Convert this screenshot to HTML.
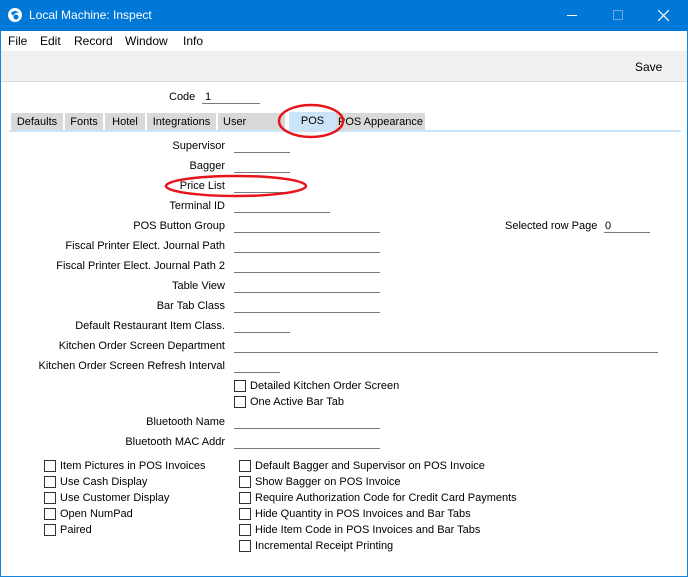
<!DOCTYPE html>
<html><head><meta charset="utf-8"><style>
*{margin:0;padding:0;box-sizing:border-box}
body{width:688px;height:577px;position:relative;background:#fff;font-family:"Liberation Sans",sans-serif;font-size:11px;color:#000;overflow:hidden}
.win{position:absolute;left:0;top:0;width:688px;height:577px;border:1px solid #1883d7}
.title{position:absolute;left:0;top:0;width:688px;height:31px;background:#0078d7;color:#fff;font-size:12px}
.menu{position:absolute;top:31px;left:1px;width:686px;height:20px;background:#fff;font-size:12px}
.menu span{position:absolute;top:3px}
.tool{position:absolute;top:51px;left:1px;width:686px;height:31px;background:#f0f0f0;border-bottom:1px solid #dadada}
.a{position:absolute;white-space:nowrap}
.l{position:absolute;right:463px;white-space:nowrap;text-align:right}
.f{position:absolute;height:1px;background:#7a7a7a}
.cb{position:absolute;width:12px;height:12px;border:1px solid #333;background:#fff}
.tab{position:absolute;top:113px;height:18px;background:#d9d9d9;text-align:center;line-height:18px}
</style></head><body>
<div class="win"></div>
<div class="title">
<svg style="position:absolute;left:7px;top:7px" width="16" height="16" viewBox="0 0 16 16"><circle cx="8" cy="8" r="7" fill="#fff"/><path d="M4 6 Q8 2 12 6 Q8 5 6 9 Z" fill="#0078d7"/><circle cx="9" cy="10" r="2.5" fill="#0078d7"/></svg>
<span class="a" style="left:29px;top:8px">Local Machine: Inspect</span>
<div style="position:absolute;left:567px;top:15px;width:10px;height:1px;background:#fff"></div>
<div style="position:absolute;left:613px;top:10px;width:10px;height:10px;border:1px solid #6fa9df"></div>
<svg style="position:absolute;left:658px;top:10px" width="11" height="11"><path d="M0 0L11 11M11 0L0 11" stroke="#fff" stroke-width="1.2"/></svg>
</div>
<div class="menu"><span style="left:7px">File</span><span style="left:39px">Edit</span><span style="left:73px">Record</span><span style="left:124px">Window</span><span style="left:182px">Info</span></div>
<div class="tool"><span class="a" style="left:634px;top:9px;font-size:12px">Save</span></div>

<span class="a" style="left:169px;top:91px">Code</span>
<span class="a" style="left:205px;top:91px">1</span>
<div class="f" style="left:202px;top:103px;width:58px"></div>

<div class="tab" style="left:11px;width:52px">Defaults</div>
<div class="tab" style="left:65px;width:38px">Fonts</div>
<div class="tab" style="left:105px;width:40px">Hotel</div>
<div class="tab" style="left:147px;width:69px">Integrations</div>
<div class="tab" style="left:218px;width:67px;text-align:left;padding-left:5px;overflow:hidden">User Defined</div>
<div class="tab" style="left:336px;width:89px">POS Appearance</div>
<div class="tab" style="left:289px;width:47px;background:#cce4f7;top:112px;height:19px">POS</div>
<div style="position:absolute;left:9px;top:130px;width:672px;height:2px;background:#cce4f7"></div>

<span class="l" style="top:140px">Supervisor</span><div class="f" style="left:234px;top:152px;width:56px"></div>
<span class="l" style="top:160px">Bagger</span><div class="f" style="left:234px;top:172px;width:56px"></div>
<span class="l" style="top:180px">Price List</span><div class="f" style="left:234px;top:192px;width:56px"></div>
<span class="l" style="top:200px">Terminal ID</span><div class="f" style="left:234px;top:212px;width:96px"></div>
<span class="l" style="top:220px">POS Button Group</span><div class="f" style="left:234px;top:232px;width:146px"></div>
<span class="l" style="top:240px">Fiscal Printer Elect. Journal Path</span><div class="f" style="left:234px;top:252px;width:146px"></div>
<span class="l" style="top:260px">Fiscal Printer Elect. Journal Path 2</span><div class="f" style="left:234px;top:272px;width:146px"></div>
<span class="l" style="top:280px">Table View</span><div class="f" style="left:234px;top:292px;width:146px"></div>
<span class="l" style="top:300px">Bar Tab Class</span><div class="f" style="left:234px;top:312px;width:146px"></div>
<span class="l" style="top:320px">Default Restaurant Item Class.</span><div class="f" style="left:234px;top:332px;width:56px"></div>
<span class="l" style="top:340px">Kitchen Order Screen Department</span><div class="f" style="left:234px;top:352px;width:424px"></div>
<span class="l" style="top:360px">Kitchen Order Screen Refresh Interval</span><div class="f" style="left:234px;top:372px;width:46px"></div>
<span class="a" style="left:505px;top:220px">Selected row Page</span><span class="a" style="left:605px;top:220px">0</span><div class="f" style="left:604px;top:232px;width:46px"></div>

<div class="cb" style="left:234px;top:380px"></div><span class="a" style="left:250px;top:380px">Detailed Kitchen Order Screen</span>
<div class="cb" style="left:234px;top:396px"></div><span class="a" style="left:250px;top:396px">One Active Bar Tab</span>

<span class="l" style="top:416px">Bluetooth Name</span><div class="f" style="left:234px;top:428px;width:146px"></div>
<span class="l" style="top:436px">Bluetooth MAC Addr</span><div class="f" style="left:234px;top:448px;width:146px"></div>

<div class="cb" style="left:44px;top:460px"></div><span class="a" style="left:60px;top:460px">Item Pictures in POS Invoices</span>
<div class="cb" style="left:44px;top:476px"></div><span class="a" style="left:60px;top:476px">Use Cash Display</span>
<div class="cb" style="left:44px;top:492px"></div><span class="a" style="left:60px;top:492px">Use Customer Display</span>
<div class="cb" style="left:44px;top:508px"></div><span class="a" style="left:60px;top:508px">Open NumPad</span>
<div class="cb" style="left:44px;top:524px"></div><span class="a" style="left:60px;top:524px">Paired</span>

<div class="cb" style="left:239px;top:460px"></div><span class="a" style="left:255px;top:460px">Default Bagger and Supervisor on POS Invoice</span>
<div class="cb" style="left:239px;top:476px"></div><span class="a" style="left:255px;top:476px">Show Bagger on POS Invoice</span>
<div class="cb" style="left:239px;top:492px"></div><span class="a" style="left:255px;top:492px">Require Authorization Code for Credit Card Payments</span>
<div class="cb" style="left:239px;top:508px"></div><span class="a" style="left:255px;top:508px">Hide Quantity in POS Invoices and Bar Tabs</span>
<div class="cb" style="left:239px;top:524px"></div><span class="a" style="left:255px;top:524px">Hide Item Code in POS Invoices and Bar Tabs</span>
<div class="cb" style="left:239px;top:540px"></div><span class="a" style="left:255px;top:540px">Incremental Receipt Printing</span>

<svg style="position:absolute;left:0;top:0" width="688" height="577">
<ellipse cx="311" cy="121" rx="32" ry="16" fill="none" stroke="#e8141b" stroke-width="2.5"/>
<ellipse cx="236" cy="186" rx="70" ry="10" fill="none" stroke="#e8141b" stroke-width="2.5"/>
</svg>
</body></html>
